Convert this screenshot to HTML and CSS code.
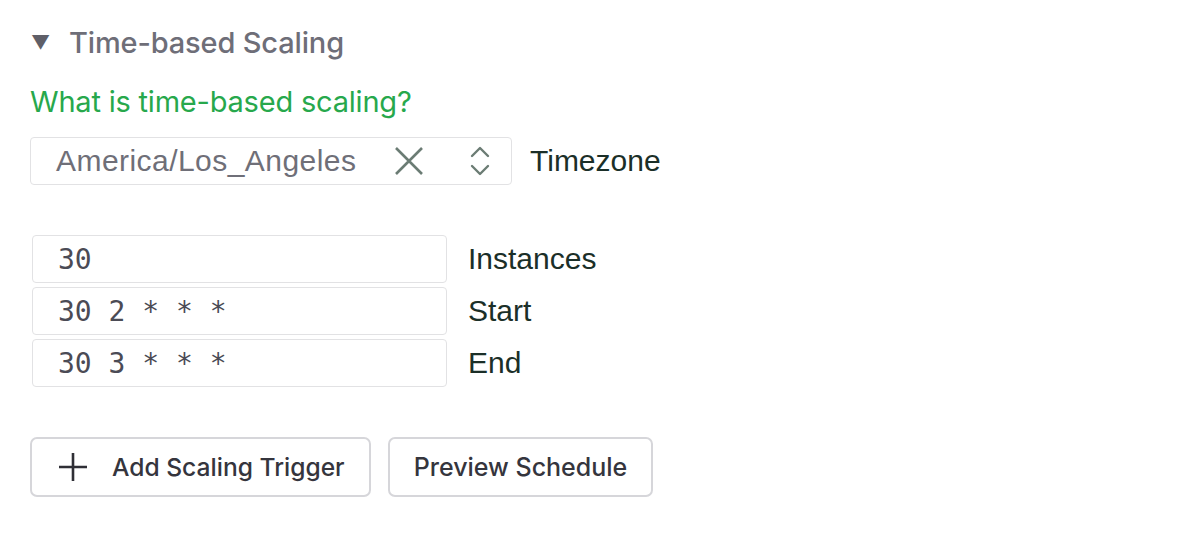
FILE: index.html
```html
<!DOCTYPE html>
<html>
<head>
<meta charset="utf-8">
<link rel="stylesheet" href="styles.css">
</head>
<body>
<div class="panel">
  <div class="summary"><span class="caret">▼</span><span class="title">Time-based Scaling</span></div>
  <a class="help" href="#">What is time-based scaling?</a>
  <div class="tz-row">
    <div class="select">
      <span class="select-value">America/Los_Angeles</span>
      <svg class="clear" width="30" height="30" viewBox="0 0 30 30"><path d="M2 2 L28 28 M28 2 L2 28" stroke="#6b7c74" stroke-width="2.6" fill="none"/></svg>
      <svg class="updown" width="22" height="30" viewBox="0 0 22 30"><path d="M3 10 L11 2 L19 10 M3 20 L11 28 L19 20" stroke="#6b7c74" stroke-width="2.4" fill="none" stroke-linecap="round" stroke-linejoin="round"/></svg>
    </div>
    <span class="label">Timezone</span>
  </div>
  <div class="fields">
    <div class="field"><div class="input">30</div><span class="label">Instances</span></div>
    <div class="field"><div class="input">30 2 * * *</div><span class="label">Start</span></div>
    <div class="field"><div class="input">30 3 * * *</div><span class="label">End</span></div>
  </div>
  <div class="buttons">
    <button class="btn btn-add"><svg width="30" height="30" viewBox="0 0 30 30"><path d="M15 1 V29 M1 15 H29" stroke="#2f2f36" stroke-width="2.6" fill="none"/></svg><span>Add Scaling Trigger</span></button>
    <button class="btn btn-preview">Preview Schedule</button>
  </div>
</div>
</body>
</html>
```
FILE: styles.css
```css
html, body {
  margin: 0;
  padding: 0;
  background: #ffffff;
}
body {
  font-family: Inter, "Liberation Sans", sans-serif;
}
.panel {
  padding: 26px 0 0 30px;
  display: flex;
  flex-direction: column;
  align-items: flex-start;
}
.summary {
  display: flex;
  align-items: center;
  height: 32px;
  color: #6e6e78;
}
.caret {
  font-size: 19px;
  width: 38px;
  padding-left: 1px;
  color: #5f5f68;
}
.title {
  font-size: 29px;
  font-weight: 500;
  letter-spacing: -0.15px;
}
.help {
  margin-top: 28px;
  font-size: 29px;
  color: #27a84c;
  text-decoration: none;
  line-height: 32px;
  letter-spacing: -0.2px;
}
.tz-row {
  margin-top: 19px;
  display: flex;
  align-items: center;
  gap: 18px;
}
.select {
  width: 480px;
  height: 46px;
  border: 1px solid #e2e2e4;
  border-radius: 4px;
  display: flex;
  align-items: center;
  box-sizing: content-box;
}
.select-value {
  font-family: "Liberation Sans", Arial, sans-serif;
  font-size: 30px;
  letter-spacing: 0.45px;
  color: #6f6f78;
  margin-left: 25px;
  flex: 1;
}
.clear {
  margin-right: 45px;
}
.updown {
  margin-right: 20px;
}
.label {
  font-family: "Liberation Sans", Arial, sans-serif;
  font-size: 30px;
  color: #1b2f28;
}
.fields {
  margin-top: 50px;
  display: flex;
  flex-direction: column;
  gap: 4px;
  margin-left: 2px;
}
.field {
  display: flex;
  align-items: center;
  gap: 21px;
}
.input {
  width: 388px;
  height: 46px;
  border: 1px solid #e2e2e4;
  border-radius: 4px;
  padding-left: 25px;
  display: flex;
  align-items: center;
  font-family: "DejaVu Sans Mono", monospace;
  font-size: 28px;
  color: #4b4b55;
  white-space: pre;
}
.buttons {
  margin-top: 50px;
  display: flex;
  gap: 17px;
}
.btn {
  height: 60px;
  border: 2px solid #d6d6da;
  border-radius: 7px;
  background: #ffffff;
  font-family: Inter, "Liberation Sans", sans-serif;
  font-size: 25px;
  font-weight: 500;
  color: #35353d;
  display: flex;
  align-items: center;
  padding: 0;
}
.btn-add {
  width: 341px;
  padding-left: 26px;
  gap: 24px;
}
.btn-add span {
  font-size: 24.6px;
}
.btn-preview {
  width: 265px;
  justify-content: center;
}
```
